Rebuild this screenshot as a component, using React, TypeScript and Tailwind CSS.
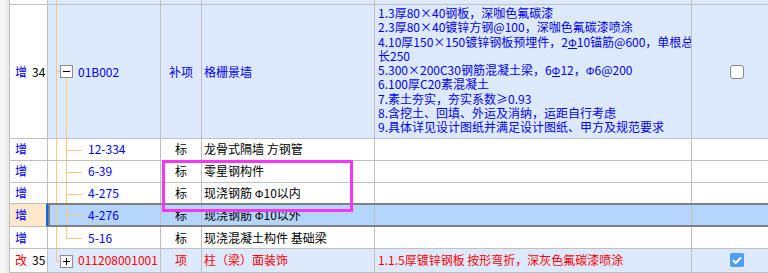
import type { ReactNode } from "react";

// Sub-items under 01B002
const subs = [
  { code: "12-334", name: "龙骨式隔墙 方钢管" },
  { code: "6-39", name: "零星钢构件" },
  { code: "4-275", name: "现浇钢筋 ", dia: "10以内" },
  { code: "4-276", name: "现浇钢筋 ", dia: "10以外", selected: true },
  { code: "5-16", name: "现浇混凝土构件 基础梁", last: true },
];

function Phi() {
  return <span className="font-['Liberation_Sans',sans-serif] text-[11px]">Φ</span>;
}

function Rebar() {
  return (
    <span className="inline-block border-b border-[#0000ff] font-['Liberation_Sans',sans-serif] text-[11px] leading-[10px]">Φ</span>
  );
}

const desc: ReactNode[] = [
  "1.3厚80×40钢板，深咖色氟碳漆",
  "2.3厚80×40镀锌方钢@100，深咖色氟碳漆喷涂",
  <>4.10厚150×150镀锌钢板预埋件，2<Rebar />10锚筋@600，单根总</>,
  "长250",
  <>5.300×200C30钢筋混凝土梁，6<Rebar />12，<Phi />6@200</>,
  "6.100厚C20素混凝土",
  "7.素土夯实，夯实系数≥0.93",
  "8.含挖土、回填、外运及消纳，运距自行考虑",
  "9.具体详见设计图纸并满足设计图纸、甲方及规范要求",
];

function Box({ open }: { open: boolean }) {
  return (
    <span className="absolute left-[12px] flex h-[13px] w-[13px] items-center justify-center border border-[#8c8c8c] bg-white">
      <span className="h-px w-[7px] bg-black" />
      {!open && <span className="absolute h-[7px] w-px bg-black" />}
    </span>
  );
}

function Check({ checked }: { checked: boolean }) {
  if (checked) {
    return (
      <span className="flex h-[14px] w-[14px] items-center justify-center rounded-[2px] bg-[#4f9ef4]">
        <svg width="10" height="8" viewBox="0 0 10 8">
          <path d="M1 4.2 L3.8 7 L9 1.5" stroke="white" strokeWidth="2" fill="none" />
        </svg>
      </span>
    );
  }
  return <span className="h-[14px] w-[14px] rounded-[3px] border border-[#8a8a8a] bg-white" />;
}

function Name({ name, dia }: { name: string; dia?: string }) {
  return (
    <span>
      {name}
      {dia && (
        <>
          <Phi />
          {dia}
        </>
      )}
    </span>
  );
}

function SubRow({ code, name, dia, last }: { code: string; name: string; dia?: string; last?: boolean }) {
  return (
    <div className="flex h-[23px] border-b border-[#c0c0c0] bg-white">
      <div className="flex w-[38px] shrink-0 items-center border-r border-[#c0c0c0] pl-[5px] text-[#0000ff]">增</div>
      <div className="relative flex w-[113px] shrink-0 items-center border-r border-[#c0c0c0] pl-[40px] text-[#0000ff]">
        <span className="absolute bottom-0 left-[8px] top-0 w-px bg-[#ffc77f]" />
        <span className={last ? "absolute left-[18px] top-0 h-[11px] w-px bg-[#ffc77f]" : "absolute bottom-0 left-[18px] top-0 w-px bg-[#ffc77f]"} />
        <span className="absolute left-[18px] top-[11px] h-px w-[16px] bg-[#ffc77f]" />
        {code}
      </div>
      <div className="flex w-[41px] shrink-0 items-center justify-center border-r border-[#c0c0c0]">标</div>
      <div className="flex w-[173px] shrink-0 items-center whitespace-pre border-r border-[#c0c0c0] pl-[2px]">
        <Name name={name} dia={dia} />
      </div>
      <div className="w-[317px] shrink-0 border-r border-[#c0c0c0]" />
      <div className="flex-1" />
    </div>
  );
}

function SelectedRow({ code, name, dia }: { code: string; name: string; dia?: string }) {
  return (
    <div className="-mt-px flex h-[25px]">
      <div className="flex w-[38px] shrink-0 items-center border-y border-r-2 border-y-[#c0c0c0] border-r-[#0b66e8] bg-[#fde8cc] pl-[5px] text-[#0000ff]">增</div>
      <div className="flex flex-1 border-2 border-r-0 border-[#808080] bg-[#b4d5fd]">
        <div className="relative flex w-[111px] shrink-0 items-center border-r border-[#c0c0c0] pl-[38px] text-[#0000ff]">
          <span className="absolute bottom-0 left-[6px] top-0 w-px bg-[#ffc77f]" />
          <span className="absolute bottom-0 left-[16px] top-0 w-px bg-[#ffc77f]" />
          <span className="absolute left-[16px] top-[10px] h-px w-[16px] bg-[#ffc77f]" />
          {code}
        </div>
        <div className="flex w-[41px] shrink-0 items-center justify-center border-r border-[#c0c0c0]">标</div>
        <div className="flex w-[173px] shrink-0 items-center whitespace-pre border-r border-[#c0c0c0] pl-[2px]">
          <Name name={name} dia={dia} />
        </div>
        <div className="w-[317px] shrink-0 border-r border-[#c0c0c0]" />
        <div className="flex-1" />
      </div>
    </div>
  );
}

export default function App() {
  return (
    <div className="relative flex h-[273px] w-[768px] overflow-hidden bg-white font-['Noto_Sans_CJK_SC',sans-serif] text-[12px] leading-none text-black">
      {/* left gutter */}
      <div className="flex w-[9px] shrink-0">
        <div className="w-[6px] bg-[#f4f4f4]" />
        <div className="w-[3px] bg-[#e9e9e9]" />
      </div>

      <div className="flex flex-1 flex-col border-l border-[#c0c0c0]">
        {/* tail of the previous row */}
        <div className="flex h-[5px] shrink-0 border-b border-[#c0c0c0]">
          <div className="w-[38px] shrink-0 border-r border-[#c0c0c0] bg-white" />
          <div className="relative w-[113px] shrink-0 border-r border-[#c0c0c0] bg-[#dde9fd]">
            <span className="absolute bottom-0 left-[8px] top-0 w-px bg-[#ffc77f]" />
          </div>
          <div className="w-[41px] shrink-0 border-r border-[#c0c0c0] bg-[#dde9fd]" />
          <div className="w-[173px] shrink-0 border-r border-[#c0c0c0] bg-[#dde9fd]" />
          <div className="w-[317px] shrink-0 border-r border-[#c0c0c0] bg-[#dde9fd]" />
          <div className="flex-1 bg-[#dde9fd]" />
        </div>

        {/* 34 */}
        <div className="flex h-[134px] shrink-0 border-b border-[#c0c0c0]">
          <div className="flex w-[38px] shrink-0 items-center border-r border-[#c0c0c0] bg-white pl-[5px]">
            <span className="text-[#0000ff]">增</span>
            <span className="ml-[5px]">34</span>
          </div>
          <div className="relative flex w-[113px] shrink-0 items-center border-r border-[#c0c0c0] bg-[#dde9fd] pl-[30px] text-[#0000ff]">
            <span className="absolute bottom-0 left-[8px] top-0 w-px bg-[#ffc77f]" />
            <span className="absolute left-[8px] top-[66px] h-px w-[4px] bg-[#ffc77f]" />
            <span className="absolute bottom-0 left-[18px] top-[73px] w-px bg-[#ffc77f]" />
            <div className="absolute left-0 top-[60px] h-[13px] w-full">
              <Box open />
            </div>
            01B002
          </div>
          <div className="flex w-[41px] shrink-0 items-center justify-center border-r border-[#c0c0c0] bg-[#dde9fd] text-[#0000ff]">补项</div>
          <div className="flex w-[173px] shrink-0 items-center border-r border-[#c0c0c0] bg-[#dde9fd] pl-[2px] text-[#0000ff]">格栅景墙</div>
          <div className="w-[317px] shrink-0 overflow-hidden border-r border-[#c0c0c0] bg-[#dde9fd] pl-[3px] pt-[1px] text-[#0000ff]">
            {desc.map((d, i) => (
              <div key={i} className="h-[14.25px] whitespace-nowrap leading-[14.25px]">{d}</div>
            ))}
          </div>
          <div className="flex flex-1 items-center bg-[#dde9fd] pl-[38px]">
            <Check checked={false} />
          </div>
        </div>

        {subs.map((s) =>
          s.selected ? (
            <SelectedRow key={s.code} code={s.code} name={s.name} dia={s.dia} />
          ) : (
            <SubRow key={s.code} code={s.code} name={s.name} dia={s.dia} last={s.last} />
          )
        )}

        {/* 35 */}
        <div className="flex h-[24px] shrink-0 border-b border-[#c0c0c0]">
          <div className="flex w-[38px] shrink-0 items-center border-r border-[#c0c0c0] bg-white pl-[5px]">
            <span className="text-[#ff0000]">改</span>
            <span className="ml-[5px]">35</span>
          </div>
          <div className="relative flex w-[113px] shrink-0 items-center border-r border-[#c0c0c0] bg-[#dde9fd] pl-[30px] text-[#ff0000]">
            <span className="absolute left-[8px] top-0 h-[12px] w-px bg-[#ffc77f]" />
            <span className="absolute left-[8px] top-[12px] h-px w-[4px] bg-[#ffc77f]" />
            <div className="absolute left-0 top-[6px] h-[13px] w-full">
              <Box open={false} />
            </div>
            011208001001
          </div>
          <div className="flex w-[41px] shrink-0 items-center justify-center border-r border-[#c0c0c0] bg-[#dde9fd] text-[#ff0000]">项</div>
          <div className="flex w-[173px] shrink-0 items-center border-r border-[#c0c0c0] bg-[#dde9fd] pl-[2px] text-[#ff0000]">柱（梁）面装饰</div>
          <div className="flex w-[317px] shrink-0 items-center overflow-hidden whitespace-nowrap border-r border-[#c0c0c0] bg-[#dde9fd] pl-[3px] text-[#ff0000]">
            1.1.5厚镀锌钢板 按形弯折，深灰色氟碳漆喷涂
          </div>
          <div className="flex flex-1 items-center bg-[#dde9fd] pl-[38px]">
            <Check checked />
          </div>
        </div>
      </div>

      {/* annotation frame */}
      <div className="absolute left-[162px] top-[160px] h-[52px] w-[191px] border-[3px] border-[#f536f5]" />
    </div>
  );
}
